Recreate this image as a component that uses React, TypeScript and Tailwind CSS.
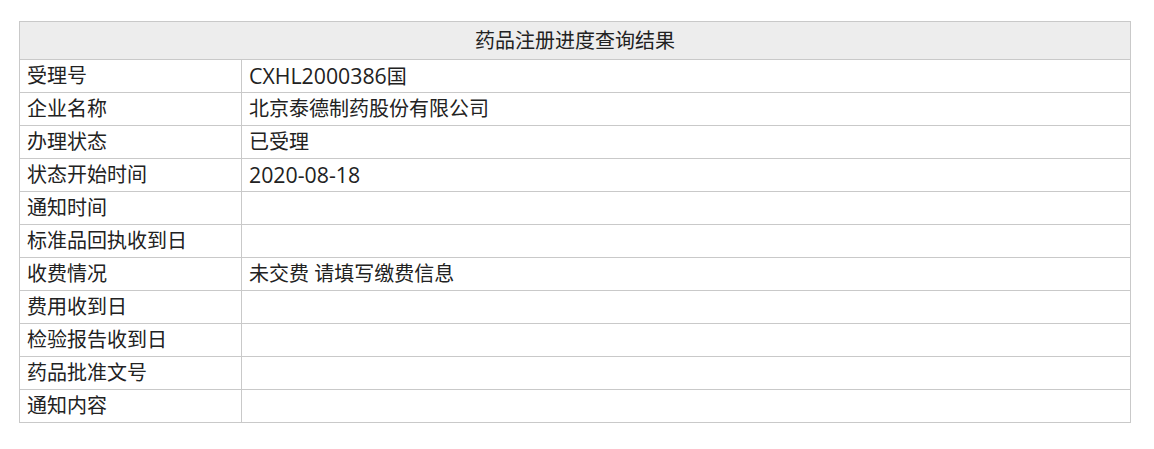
import React from 'react';

// latin runs are wrapped so they get the slightly wider YaHei-like width
const Latin: React.FC<{ children: React.ReactNode }> = ({ children }) => (
  <span className="text-[21.3px]">{children}</span>
);

const rows: [string, React.ReactNode][] = [
  ['受理号', <><Latin>CXHL2000386</Latin>国</>],
  ['企业名称', '北京泰德制药股份有限公司'],
  ['办理状态', '已受理'],
  ['状态开始时间', <Latin>2020-08-18</Latin>],
  ['通知时间', ''],
  ['标准品回执收到日', ''],
  ['收费情况', '未交费 请填写缴费信息'],
  ['费用收到日', ''],
  ['检验报告收到日', ''],
  ['药品批准文号', ''],
  ['通知内容', ''],
];

const App: React.FC = () => {
  return (
    <div
      className="min-h-[449px] bg-white pt-[21px] pl-[19px] pr-[23px] text-[#222]"
      style={{ fontFamily: '"Open Sans", "Noto Sans CJK SC", sans-serif' }}
    >
      <table className="w-[1112px] border-collapse text-[20px] leading-none">
        <thead>
          <tr className="h-[38px] bg-[#ededed]">
            <th colSpan={2} className="border border-[#c9c9c9] text-center font-normal">
              药品注册进度查询结果
            </th>
          </tr>
        </thead>
        <tbody>
          {rows.map(([label, value]) => (
            <tr key={label} className="h-[33px]">
              <td className="w-[222px] border border-[#c9c9c9] pl-[7px]">{label}</td>
              <td className="border border-[#c9c9c9] pl-[7px]">{value}</td>
            </tr>
          ))}
        </tbody>
      </table>
    </div>
  );
};

export default App;
